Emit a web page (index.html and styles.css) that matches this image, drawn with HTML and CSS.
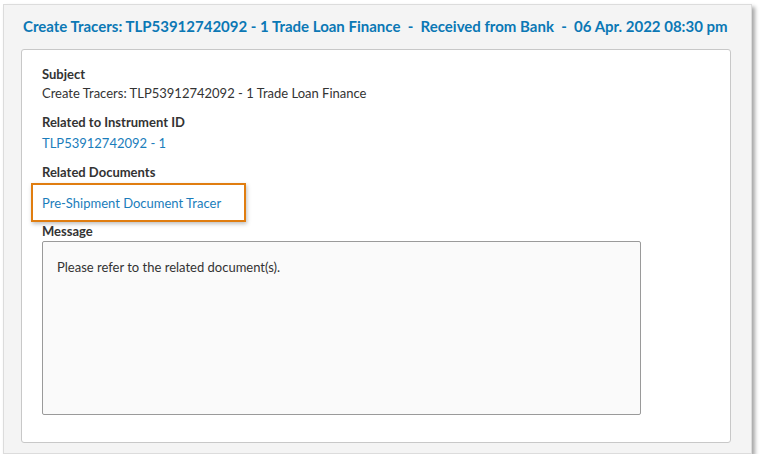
FILE: index.html
```html
<!DOCTYPE html>
<html lang="en">
<head>
    <meta charset="UTF-8">
    <title>Tracer Message</title>
    <link rel="stylesheet" href="styles.css">
</head>
<body>
    <div class="panel">
        <h2 class="panel-title">Create Tracers: TLP53912742092 - 1 Trade Loan Finance &nbsp;-&nbsp; Received from Bank &nbsp;-&nbsp; 06 Apr. 2022 08:30 pm</h2>

        <div class="card">
            <div class="field">
                <label>Subject</label>
                <span class="value">Create Tracers: TLP53912742092 - 1 Trade Loan Finance</span>
            </div>

            <div class="field">
                <label>Related to Instrument ID</label>
                <a class="value link id-link" href="#">TLP53912742092 - 1</a>
            </div>

            <div class="field">
                <label>Related Documents</label>
                <div class="doc-highlight">
                    <a class="link" href="#">Pre-Shipment Document Tracer</a>
                </div>
            </div>

            <div class="field message-field">
                <label>Message</label>
                <div class="message-box">Please refer to the related document(s).</div>
            </div>
        </div>
    </div>
</body>
</html>
```

FILE: styles.css
```css
body {
    font-family: Lato, 'Noto Sans', sans-serif;
    background-color: #fff;
    margin: 0;
    padding: 4px 0 0 3px;
    color: #333;
}

.panel {
    width: 749px;
    height: 450px;
    box-sizing: border-box;
    background-color: #f4f4f4;
    border: 1px solid #dcdcdc;
    box-shadow: 3px 3px 4px rgba(0, 0, 0, 0.35);
    padding: 0 20px 0 17px;
}

.panel-title {
    margin: 12px 0 14px 2px;
    font-size: 15px;
    font-weight: bold;
    color: #0b78b5;
    white-space: nowrap;
    line-height: 18px;
}

.card {
    background-color: #fff;
    border: 1px solid #c8c8c8;
    border-radius: 3px;
    height: 394px;
    box-sizing: border-box;
    padding: 15px 20px 0 20px;
}

.field {
    display: flex;
    flex-direction: column;
    align-items: flex-start;
    margin-bottom: 10px;
}

label {
    font-size: 13px;
    font-weight: bold;
    color: #333;
    line-height: 19px;
}

.value {
    font-size: 13px;
    line-height: 19px;
    color: #333;
}

.link {
    font-size: 13px;
    color: #1a7dbb;
    text-decoration: none;
}

.id-link {
    margin-top: 2px;
}

.doc-highlight {
    margin: 1px 0 0 -11px;
    padding: 8px 23px 8px 9px;
    border: 2px solid #e07d10;
    box-shadow: 1px 2px 4px rgba(0, 0, 0, 0.25);
    line-height: 17px;
}

.message-field {
    margin-top: -10px;
}

.message-box {
    width: 599px;
    height: 174px;
    box-sizing: border-box;
    background-color: #fafafa;
    border: 1px solid #9a9a9a;
    border-radius: 2px;
    padding: 16px 14px;
    font-size: 13px;
    line-height: 19px;
    color: #333;
}
```
